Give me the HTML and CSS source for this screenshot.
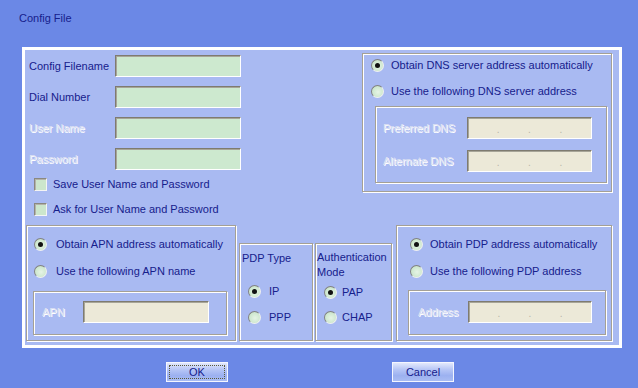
FILE: index.html
```html
<!DOCTYPE html>
<html>
<head>
<meta charset="utf-8">
<link rel="stylesheet" href="styles.css">
</head>
<body>
<div class="window">
  <div class="title">Config File</div>
  <div class="panel">
    <div class="top">
      <div class="form">
        <div class="row"><span class="lbl">Config Filename</span><span class="field"></span></div>
        <div class="row"><span class="lbl">Dial Number</span><span class="field"></span></div>
        <div class="row"><span class="lbl off">User Name</span><span class="field"></span></div>
        <div class="row"><span class="lbl off">Password</span><span class="field"></span></div>
        <div class="check first"><span class="cbox"></span>Save User Name and Password</div>
        <div class="check"><span class="cbox"></span>Ask for User Name and Password</div>
      </div>
      <div class="group dns">
        <div class="opt"><span class="radio on"></span>Obtain DNS server address automatically</div>
        <div class="opt second"><span class="radio"></span>Use the following DNS server address</div>
        <div class="group sub dns-sub">
          <div class="irow"><span class="lbl off w84">Preferred DNS</span><span class="field ip w125"><i>.</i><i>.</i><i>.</i></span></div>
          <div class="irow second"><span class="lbl off w84">Alternate DNS</span><span class="field ip w125"><i>.</i><i>.</i><i>.</i></span></div>
        </div>
      </div>
    </div>
    <div class="bottom">
      <div class="group apn">
        <div class="opt"><span class="radio on"></span>Obtain APN address automatically</div>
        <div class="opt second"><span class="radio"></span>Use the following APN name</div>
        <div class="group sub apn-sub">
          <div class="irow"><span class="lbl off w41">APN</span><span class="field beige w126"></span></div>
        </div>
      </div>
      <div class="group pdptype">
        <div class="cap">PDP Type</div>
        <div class="opt r1"><span class="radio on"></span>IP</div>
        <div class="opt r2"><span class="radio"></span>PPP</div>
      </div>
      <div class="group auth">
        <div class="cap">Authentication<br>Mode</div>
        <div class="opt r1"><span class="radio on"></span>PAP</div>
        <div class="opt r2"><span class="radio"></span>CHAP</div>
      </div>
      <div class="group pdpaddr">
        <div class="opt"><span class="radio on"></span>Obtain PDP address automatically</div>
        <div class="opt second"><span class="radio"></span>Use the following PDP address</div>
        <div class="group sub pdp-sub">
          <div class="irow"><span class="lbl off w50">Address</span><span class="field ip w124"><i>.</i><i>.</i><i>.</i></span></div>
        </div>
      </div>
    </div>
  </div>
  <div class="buttons">
    <button class="btn ok"><span class="focus">OK</span></button>
    <button class="btn cancel"><span class="focus nofocus">Cancel</span></button>
  </div>
</div>
</body>
</html>
```
FILE: styles.css
```css
* { box-sizing: border-box; }
html, body {
  margin: 0;
  padding: 0;
  background: #6b88e6;
  width: 638px;
  height: 388px;
  overflow: hidden;
}
body {
  font-family: "Liberation Sans", Arial, sans-serif;
  font-size: 11px;
  color: #16208c;
}
.title {
  height: 47px;
  padding: 12px 0 0 19px;
  line-height: 13px;
}
.panel {
  margin-left: 22px;
  width: 600px;
  height: 301px;
  border: 3px solid #ffffff;
  background: #a9baf2;
  display: flex;
  flex-direction: column;
  justify-content: space-between;
}
.top {
  display: flex;
  justify-content: space-between;
  align-items: flex-start;
  padding: 0 7px 0 4px;
}
.form { padding-top: 5px; }
.row {
  display: flex;
  align-items: center;
  height: 22px;
  margin-bottom: 9px;
}
.lbl { width: 86px; white-space: nowrap; line-height: 13px; }
.off {
  color: #dde1f2;
  text-shadow: 1px 1px 0 #ffffff;
}
.field {
  display: block;
  width: 126px;
  height: 22px;
  background: #cde9cf;
  border: 1px solid;
  border-color: #7e7b70 #ffffff #ffffff #7e7b70;
  box-shadow: inset 1px 1px 0 #a7a598;
}
.ip, .beige { background: #ece9d8; }
.ip {
  display: flex;
  justify-content: space-evenly;
  align-items: flex-end;
  padding-bottom: 3px;
}
.ip i {
  font-style: normal;
  color: #b8b5a8;
  font-size: 10px;
  line-height: 10px;
}
.w125 { width: 125px; }
.w124 { width: 124px; }
.w126 { width: 126px; }
.w84 { width: 84px; }
.w41 { width: 41px; }
.w50 { width: 50px; }
.check {
  display: flex;
  align-items: center;
  height: 13px;
  margin-left: 5px;
  margin-top: 12px;
  white-space: nowrap;
  line-height: 13px;
}
.check.first { margin-top: -1px; }
.cbox {
  width: 13px;
  height: 13px;
  margin-right: 6px;
  background: #cce6cc;
  border: 1px solid;
  border-color: #8a8880 #f4f4f4 #f4f4f4 #8a8880;
  box-shadow: inset 1px 1px 0 #b4b2a8;
  flex: none;
}
.group {
  border: 1px solid #a4a096;
  box-shadow: 1px 1px 0 #ffffff, inset 1px 1px 0 #ffffff;
}
.opt {
  display: flex;
  align-items: center;
  height: 14px;
  line-height: 14px;
  white-space: nowrap;
}
.radio {
  flex: none;
  position: relative;
  width: 13px;
  height: 13px;
  border-radius: 50%;
  border: 1px solid;
  border-color: #828282 #f0f0f0 #f0f0f0 #828282;
  background: radial-gradient(circle at 55% 55%, #e6f4e6 0%, #cfe8cf 60%, #b9d8b9 100%);
  margin-right: 7px;
}
.radio.on::after {
  content: "";
  position: absolute;
  left: 3px;
  top: 3px;
  width: 5px;
  height: 5px;
  border-radius: 50%;
  background: #111111;
}
.sub { }
.irow {
  display: flex;
  align-items: center;
  height: 22px;
}
/* DNS box */
.dns {
  margin-top: 3px;
  width: 250px;
  height: 139px;
  padding: 4px 4px 0 8px;
}
.dns .opt { margin-top: 0; }
.dns .opt.second { margin-top: 12px; }
.dns-sub {
  margin: 8px 0 0 4px;
  width: 232px;
  height: 77px;
  padding: 10px 0 0 7px;
}
.dns-sub .irow.second { margin-top: 11px; }
/* Bottom */
.bottom {
  display: flex;
  align-items: flex-end;
  padding: 0 7px 4px 1px;
}
.apn {
  width: 210px;
  height: 116px;
  padding: 11px 0 0 6px;
}
.apn .opt { padding-left: 1px; }
.apn .opt .radio { margin-right: 9px; }
.apn .opt.second { margin-top: 13px; }
.apn-sub {
  margin-top: 13px;
  width: 194px;
  height: 44px;
  padding: 9px 0 0 8px;
}
.pdptype {
  margin-left: 3px;
  width: 74px;
  height: 98px;
  padding: 7px 0 0 2px;
}
.cap { line-height: 15px; }
.pdptype .opt { padding-left: 6px; }
.pdptype .opt .radio { margin-right: 8px; }
.pdptype .r1 { margin-top: 18px; }
.pdptype .r2 { margin-top: 12px; }
.auth {
  margin-left: 2px;
  width: 77px;
  height: 98px;
  padding: 6px 0 0 1px;
}
.auth .opt { padding-left: 7px; }
.auth .opt .radio { margin-right: 5px; }
.auth .r1 { margin-top: 5px; }
.auth .r2 { margin-top: 11px; }
.pdpaddr {
  margin-left: 4px;
  width: 216px;
  height: 116px;
  padding: 11px 0 0 11px;
}
.pdpaddr .opt { padding-left: 2px; }
.pdpaddr .opt.second { margin-top: 13px; }
.pdp-sub {
  margin-top: 12px;
  width: 198px;
  height: 45px;
  padding: 10px 0 0 9px;
}
/* Buttons */
.buttons {
  display: flex;
  margin-top: 14px;
  padding-left: 166px;
}
.btn {
  width: 62px;
  height: 20px;
  padding: 2px;
  margin: 0;
  border: 1px solid #f4f6ff;
  background: linear-gradient(#e2e8fc 0%, #b8c7f6 35%, #9cb1f0 70%, #a9bcf3 100%);
  font-family: "Liberation Sans", Arial, sans-serif;
  font-size: 11px;
  color: #16208c;
  display: flex;
}
.cancel { margin-left: 164px; }
.focus {
  flex: 1;
  display: flex;
  align-items: center;
  justify-content: center;
  border: 1px dotted #5a5a3a;
  line-height: 12px;
}
.nofocus { border-color: transparent; }
```
